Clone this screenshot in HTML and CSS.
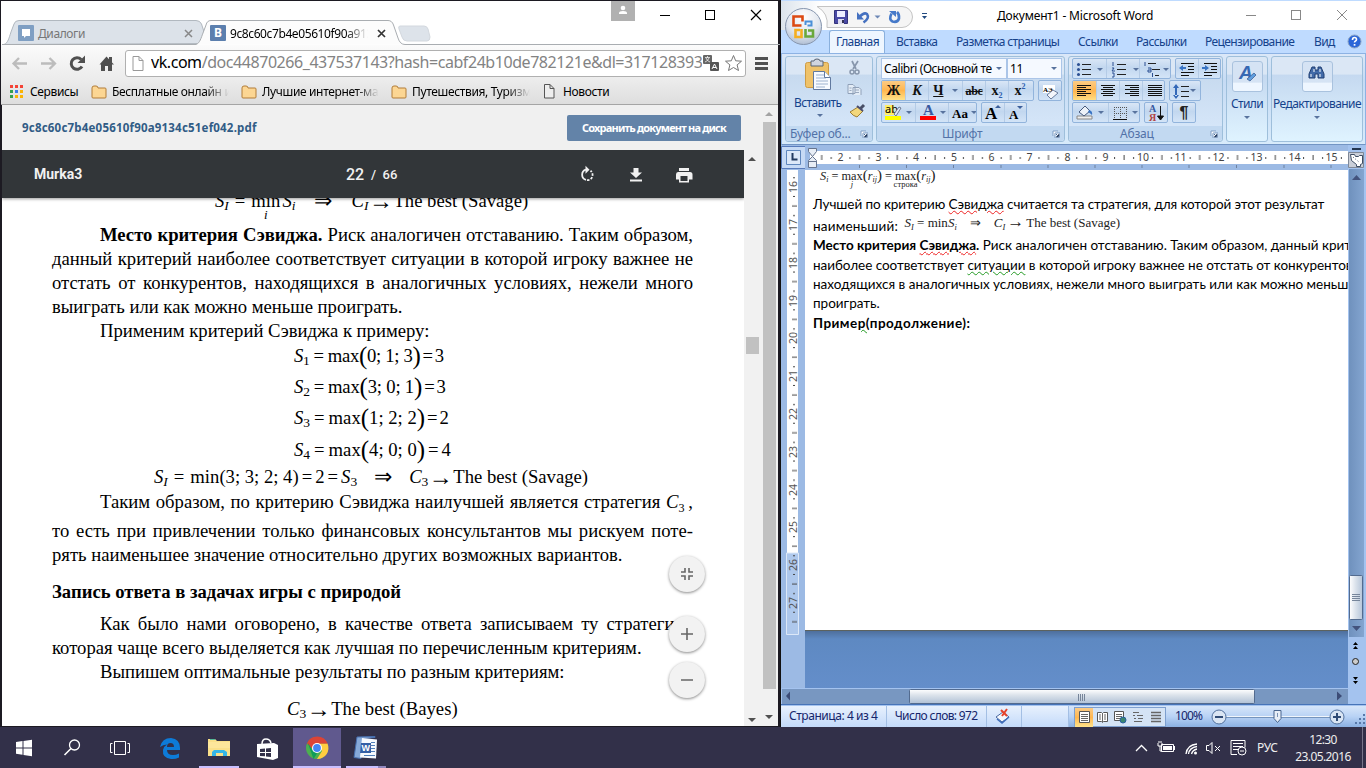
FILE: index.html
```html
<!DOCTYPE html>
<html lang="ru">
<head>
<meta charset="utf-8">
<title>Рабочий стол</title>
<link rel="stylesheet" href="styles.css">
</head>
<body>
<div class="desktop">
<main class="windows">
<section class="chrome">
  <header class="tabbar">
    <svg class="tabshapes" width="778" height="44" viewBox="2 1 778 44">
      <path d="M4 44.500C8 43 9 38 11 32L14 24Q15 20.500 19 20.500H196Q200 20.500 201.500 24L206 38Q207 43 203 43.500Z" fill="#dce2e9" stroke="#b1b8bf"/>
      <path d="M400 26H424Q427 26 428 29L430 37Q430 41 427 41H407Q403 41 402 37L399 29Q398 26 400 26Z" fill="#dde3ea" stroke="#d3d8de"/>
      <path d="M2 44.500H196C200 43 201 38 203 33L206 25Q207 20.500 211 20.500H388Q392 20.500 393.500 25L398 38Q400 44.500 405 44.500H780" fill="#fcfcfc" stroke="#a9adb1"/>
    </svg>
    <div class="tab first">
      <svg width="16" height="16"><rect width="16" height="16" rx="1" fill="#7f9fc3"/><path d="M4 4h8v7H8l-2 2v-2H4z" fill="#fff"/></svg>
      <span class="t1">Диалоги</span>
      <svg width="9" height="9"><path d="M1 1l7 7M8 1l-7 7" stroke="#888" stroke-width="1.500"/></svg>
    </div>
    <div class="tab second">
      <span class="vk">B</span><span class="t2">9c8c60c7b4e05610f90a913</span>
      <svg width="9" height="9"><path d="M1 1l7 7M8 1l-7 7" stroke="#333" stroke-width="1.700"/></svg>
    </div>
    <div class="user"><svg width="10" height="10"><circle cx="5" cy="3" r="2.300" fill="#fff"/><path d="M1 9V8q0-2 4-2t4 2v1z" fill="#fff"/></svg></div>
    <svg class="winbtns" width="104" height="14"><path d="M1 7.500h10" stroke="#000"/><rect x="46.500" y="2.500" width="9" height="9" fill="none" stroke="#000"/><path d="M92 2l10 10M102 2l-10 10" stroke="#000" stroke-width="1.200"/></svg>
  </header>
  <div class="toolbar">
    <svg class="nav" width="108" height="22" viewBox="10 51 108 22">
      <path d="M27 62.500H14M19 57l-5.500 5.500L19 68" fill="none" stroke="#bcbcbc" stroke-width="2.300"/>
      <path d="M41 62.500h13M49.500 57l5.500 5.500-5.500 5.500" fill="none" stroke="#bcbcbc" stroke-width="2.300"/>
      <path d="M82 65.500a5.800 5.800 0 1 1-.8-7" fill="none" stroke="#505050" stroke-width="3"/><path d="M85 54.500V62h-7.500z" fill="#505050"/>
      <path d="M99.500 63.500l7-8 2.500 2.800V56h3v5.500l2 2h-2V70h-4v-5h-3v5h-4v-6.500z" fill="#505050"/>
    </svg>
    <div class="omni">
      <svg width="12" height="15"><path d="M1 .5h6l4 4v10H1zM7 .5v4h4" fill="#fff" stroke="#999"/></svg>
      <span class="url"><b>vk.com</b>/doc44870266_437537143?hash=cabf24b10de782121e&amp;dl=317128393</span>
      <svg class="tr" width="16" height="16"><rect width="9" height="9" rx="1" fill="#666"/><path d="M2 2.500h5M4.500 1v2M6 3Q5 6 2 7M3 3q1 3 4 4" stroke="#eee" fill="none" stroke-width=".8"/><rect x="7" y="7" width="9" height="9" rx="1" fill="#555"/><path d="M9 14l2.500-5L14 14M10 12.500h3" stroke="#fff" fill="none"/></svg>
      <svg width="19" height="18"><path d="M9.500 1.500l2.200 5.300 5.800.4-4.400 3.700 1.400 5.600-5-3-5 3 1.400-5.600L1.500 7.200l5.800-.4z" fill="#fff" stroke="#777"/></svg>
    </div>
    <svg class="menu" width="13" height="13"><path d="M0 1.500h13M0 6.500h13M0 11.500h13" stroke="#505050" stroke-width="3"/></svg>
  </div>
  <nav class="bookmarks">
    <svg width="13" height="13"><path d="M0 0h3v3H0zM5 0h3v3H5zM10 0h3v3h-3z" fill="#f44336"/><path d="M0 5h3v3H0zM0 10h3v3H0z" fill="#34a050"/><path d="M5 5h3v3H5z" fill="#3b7de9"/><path d="M10 5h3v3h-3zM5 10h3v3H5zM10 10h3v3h-3z" fill="#fbb405"/></svg>
    <span class="b0">Сервисы</span>
    <svg width="16" height="14"><path d="M1 3Q1 1 3 1h2q2 0 2 2h7q1 0 1 1v8q0 1-1 1H2q-1 0-1-1z" fill="#fcd693" stroke="#b27d38"/></svg><span class="b1 fade">Бесплатные онлайн и</span>
    <svg width="16" height="14"><path d="M1 3Q1 1 3 1h2q2 0 2 2h7q1 0 1 1v8q0 1-1 1H2q-1 0-1-1z" fill="#fcd693" stroke="#b27d38"/></svg><span class="b2 fade">Лучшие интернет-ма</span>
    <svg width="16" height="14"><path d="M1 3Q1 1 3 1h2q2 0 2 2h7q1 0 1 1v8q0 1-1 1H2q-1 0-1-1z" fill="#fcd693" stroke="#b27d38"/></svg><span class="b3 fade">Путешествия, Туризм</span>
    <svg width="11" height="15"><path d="M.5.5H6l4 4v9.500H.5zM6 .5v4h4" fill="#eee" stroke="#555"/></svg><span class="b4">Новости</span>
  </nav>
  <div class="web">
    <div class="left">
      <div class="vkhead"><span class="fname">9c8c60c7b4e05610f90a9134c51ef042.pdf</span><span class="save">Сохранить документ на диск</span></div>
      <div class="pdfrow">
        <div class="pdf">
          <div class="pdfbar"><b>Murka3</b><span class="pg">22</span><span class="tot">/&nbsp; 66</span>
            <svg width="120" height="24" viewBox="578 161 120 24"><path d="M586 168.700a5.300 5.300 0 0 0 0 10.200" fill="none" stroke="#f1f1f1" stroke-width="1.800"/><path d="M585.500 164.800v8l4-4z" fill="#f1f1f1"/><path d="M587 179.200a5.300 5.300 0 0 0 3.500-9.500" fill="none" stroke="#f1f1f1" stroke-width="1.800" stroke-dasharray="2.500 1.300"/><path d="M633.500 167h5v4.500h3.500l-6 5.500-6-5.500h3.500zM630 178.500h12v2h-12z" fill="#f1f1f1"/><path d="M679 167h10v3h-10zM678 171h12q2.500 0 2.500 2.500v5H689v3h-10v-3h-3v-5q0-2.500 2-2.500zM680.500 175v5h7v-5z" fill="#f1f1f1" fill-rule="evenodd"/></svg>
          </div>
          <article class="page">
            <p class="m m0"><i>S</i><sub><i>I</i></sub><span class="eq">=</span><span class="mn">min<em>i</em></span><i>S</i><sub><i>i</i></sub><span class="imp">⇒</span><i>C</i><sub><i>I</i></sub><span class="ar">→</span>The best (Savage)</p>
            <p class="ind j l1"><b>Место критерия Сэвиджа.</b> Риск аналогичен отставанию. Таким образом,</p>
            <p class="j">данный критерий наиболее соответствует ситуации в которой игроку важнее не</p>
            <p class="j">отстать от конкурентов, находящихся в аналогичных условиях, нежели много</p>
            <p>выиграть или как можно меньше проиграть.</p>
            <p class="ind">Применим критерий Сэвиджа к примеру:</p>
            <p class="m f1"><i>S</i><sub>1</sub><span class="eq">=</span>max<big>(</big>0; 1; 3<big>)</big><span class="eq2">=</span>3</p>
            <p class="m f2"><i>S</i><sub>2</sub><span class="eq">=</span>max<big>(</big>3; 0; 1<big>)</big><span class="eq2">=</span>3</p>
            <p class="m f3"><i>S</i><sub>3</sub><span class="eq">=</span>max<big>(</big>1; 2; 2<big>)</big><span class="eq2">=</span>2</p>
            <p class="m f4"><i>S</i><sub>4</sub><span class="eq">=</span>max<big>(</big>4; 0; 0<big>)</big><span class="eq2">=</span>4</p>
            <p class="m f5"><i>S</i><sub><i>I</i></sub><span class="eq">=</span>min(3; 3; 2; 4)<span class="eq2">=</span>2<span class="eq2">=</span><i>S</i><sub>3</sub><span class="imp">⇒</span><i>C</i><sub>3</sub><span class="ar">→</span>The best (Savage)</p>
            <p class="ind j l6">Таким образом, по критерию Сэвиджа наилучшей является стратегия <span class="c3"><i>C</i><sub>3</sub>&thinsp;,</span></p>
            <p class="j l7">то есть при привлечении только финансовых консультантов мы рискуем поте-</p>
            <p>рять наименьшее значение относительно других возможных вариантов.</p>
            <p class="l8"><b>Запись ответа в задачах игры с природой</b></p>
            <p class="ind j l9">Как было нами оговорено, в качестве ответа записываем ту стратегию,</p>
            <p>которая чаще всего выделяется как лучшая по перечисленным критериям.</p>
            <p class="ind">Выпишем оптимальные результаты по разным критериям:</p>
            <p class="m f6"><i>C</i><sub>3</sub><span class="ar">→</span>The best (Bayes)</p>
          </article>
          <div class="fabs">
            <svg width="36" height="36"><path d="M12 16h4v-4M24 16h-4v-4M12 20h4v4M24 20h-4v4" fill="none" stroke="#666" stroke-width="1.600"/></svg>
            <svg class="plus" width="36" height="36"><path d="M12 18h12M18 12v12" stroke="#666" stroke-width="1.600"/></svg>
            <svg class="minus" width="36" height="36"><path d="M12 18h12" stroke="#666" stroke-width="1.600"/></svg>
          </div>
        </div>
        <div class="sb inner"><svg width="16" height="576" viewBox="744 150 16 576"><path d="M748 161l4-4 4 4z" fill="#505050"/><path d="M746 337h13v17h-13z" fill="#c1c1c1"/><path d="M748 718l4 4 4-4z" fill="#505050"/></svg></div>
      </div>
    </div>
    <div class="sb outer"><svg width="18" height="621" viewBox="761 105 18 621"><path d="M766 116l4-4 4 4z" fill="#a3a3a3"/><path d="M764 122h13v567h-13z" fill="#c1c1c1"/><path d="M766 715l4 4 4-4z" fill="#505050"/></svg></div>
  </div>
</section>

<section class="word">
  <header class="wtitle">
    <svg class="qat" width="170" height="52" viewBox="781 1 170 52">
      <defs><radialGradient id="orb" cx=".5" cy=".25" r=".8"><stop offset="0" stop-color="#fff"/><stop offset=".6" stop-color="#dfe5ee"/><stop offset="1" stop-color="#a8b8d0"/></radialGradient></defs>
      <path d="M817 6.500H902a10.500 10.500 0 0 1 0 21H827Q829 13 817 6.500Z" fill="#f5f5f5" stroke="#c4c4c4"/>
      <circle cx="803.500" cy="26.500" r="18" fill="url(#orb)" stroke="#8796ae"/>
      <g fill="none" stroke-width="2.600"><path d="M801.500 25.500h-8v-9h9v5" stroke="#dc4a13"/><path d="M805.500 25v-3.500h6v4h-4" stroke="#4a90d8" stroke-width="2"/><path d="M801.500 29v8h-6v-7H800" stroke="#f5ae20"/><path d="M805.500 29v7.500h7.500v-6h-5" stroke="#6aa83c"/></g>
      <path d="M834.500 10.500h13v13h-13z" fill="#4a4aa5" stroke="#33337c"/><path d="M837 11h8v6h-8z" fill="#eef"/><path d="M838 19h6v5h-6z" fill="#dde"/><path d="M842 20h2v3h-2z" fill="#335"/>
      <path d="M860 16.500q4-4.500 7-2.500 3 4-3.500 8.500" fill="none" stroke="#4571c0" stroke-width="2.600"/><path d="M857 12v7.500h7z" fill="#4571c0"/>
      <path d="M874.500 15.500h6l-3 3z" fill="#6d87b5"/>
      <path d="M891.500 13.500q-3 6 1 8 5 1.500 6.500-3 .5-4-2-6.500" fill="none" stroke="#4579c9" stroke-width="2.600"/><path d="M889 11h7v6z" fill="#4579c9"/>
      <path d="M922 13.500h5" stroke="#224a80"/><path d="M922 16h5l-2.500 3z" fill="#224a80"/>
    </svg>
    <span class="wname">Документ1 - Microsoft Word</span>
    <svg class="wbtns" width="104" height="14"><path d="M1 7.500h10" stroke="#888"/><rect x="46.500" y="2.500" width="9" height="9" fill="none" stroke="#888"/><path d="M92 2l10 10M102 2l-10 10" stroke="#888"/></svg>
  </header>
  <nav class="wtabs">
    <span class="act a0">Главная</span><span class="a1">Вставка</span><span class="a2">Разметка страницы</span><span class="a3">Ссылки</span><span class="a4">Рассылки</span><span class="a5">Рецензирование</span><span class="a6">Вид</span>
    <svg width="15" height="15"><circle cx="7.500" cy="7.500" r="6.500" fill="#2b66d8" stroke="#8ba4c6"/><path d="M5.500 6q0-2.500 2-2.500t2 2q0 1-1 1.500t-1 1.500" stroke="#fff" fill="none" stroke-width="1.600"/><path d="M6.700 10h1.700v1.700H6.700z" fill="#fff"/></svg>
  </nav>
  <div class="ribbon">
    <div class="group clip">
      <svg width="86" height="38" viewBox="786 58 86 38">
        <rect x="805.500" y="63.500" width="23" height="25" rx="2" fill="#efc269" stroke="#ce9c44"/><path d="M811 62h3q0-2 3-2t3 2h3v5h-12z" fill="#d0d5df" stroke="#5b6575"/>
        <path d="M813.500 72.500h11l6 6v12h-17z" fill="#f7faff" stroke="#61799f"/><path d="M816 76h8M816 79h10M816 82h12M816 85h12M816 88h9" stroke="#9db2cf"/><path d="M824.500 72.500v6h6" fill="#fff" stroke="#61799f"/>
        <path d="M852 62l4 8M858 62l-5 8" stroke="#8796ac" stroke-width="1.700"/><circle cx="852" cy="73" r="2" fill="none" stroke="#8796ac" stroke-width="1.500"/><circle cx="857" cy="73" r="2" fill="none" stroke="#8796ac" stroke-width="1.500"/>
        <path d="M848 85.500h5l2 2v7h-7zM853 88.500h6l2 2v6h-8z" fill="#e4edf7" stroke="#8fa0b8"/><path d="M855 91h4M855 93.500h4M849.500 89h2M849.500 91.500h2" stroke="#9aa9bf"/>
      </svg>
      <div class="cliprow"><span>Вставить</span><svg width="24" height="20" viewBox="844 101 24 20"><path d="M858 111l4-4" stroke="#484f66" stroke-width="3"/><path d="M848 114l8-5 5 4-6 6q-4-1-7-5z" fill="#f3d77b" stroke="#9d7d33"/><path d="M855 108l6 5" stroke="#4c4f70" stroke-width="2"/></svg></div>
      <svg class="dd" width="6" height="4"><path d="M0 0h6L3 3z" fill="#58739e"/></svg>
      <div class="gl"><span>Буфер об...</span><svg width="8" height="8"><path d="M1 6V1h5M3 3h5v5H3z" fill="#fff" stroke="#7f9dc4"/><path d="M4 4l3 3M7 4v3H4" stroke="#4a6a98"/></svg></div>
    </div>
    <div class="group font">
      <div class="r r1"><span class="combo c1">Calibri (Основной те<svg width="6" height="4"><path d="M0 0h6L3 3z" fill="#58739e"/></svg></span><span class="combo c2">11<svg width="6" height="4"><path d="M0 0h6L3 3z" fill="#58739e"/></svg></span></div>
      <div class="r"><div class="bg w153"><b class="on">Ж</b><b><i>К</i></b><b class="wide"><u>Ч</u><svg width="6" height="4"><path d="M0 0h6L3 3z" fill="#58739e"/></svg></b><b><s>abc</s></b><b>x<small class="lo">2</small></b><b>x<small class="hi">2</small></b></div>
        <div class="bg"><svg width="22" height="20"><rect x="4" y="4" width="12" height="8" fill="#fff"/><text x="4" y="10.500" class="tiny">АЭ</text><path d="M8 14l6-5 5 3-7 6z" fill="#f4f6fb" stroke="#687b9c"/></svg></div></div>
      <div class="r"><div class="bg w96">
        <svg width="33" height="20"><path d="M3 2h9v10H3z" fill="#ffef65"/><text x="3" y="10" class="ab">ab</text><path d="M12 11l5-7 2 1-5 8z" fill="#dfe8f5" stroke="#6d7c95"/><path d="M3 13h16v4H3z" fill="#ff0"/><path d="M24 8h6l-3 3z" fill="#58739e"/></svg>
        <svg width="33" height="20"><text x="7" y="12" class="bigA">A</text><path d="M4 13h16v4H4z" fill="#f00"/><path d="M24 8h6l-3 3z" fill="#58739e"/></svg>
        <svg width="30" height="20"><text x="3" y="15" class="aa">Aa</text><path d="M22 8h6l-3 3z" fill="#58739e"/></svg></div>
        <div class="bg"><svg width="22" height="20"><text x="3" y="16" class="aa lg">A</text><path d="M13 5h6l-3-3z" fill="#3b5f9c"/></svg><svg width="22" height="20"><text x="4" y="16" class="aa">A</text><path d="M12 3h6l-3 3z" fill="#3b5f9c"/></svg></div></div>
      <div class="gl"><span>Шрифт</span><svg width="8" height="8"><path d="M1 6V1h5M3 3h5v5H3z" fill="#fff" stroke="#7f9dc4"/><path d="M4 4l3 3M7 4v3H4" stroke="#4a6a98"/></svg></div>
    </div>
    <div class="group para">
      <div class="r"><div class="bg">
        <svg width="33" height="20"><path d="M9 5.500h9M9 10.500h9M9 15.500h9" stroke="#222"/><g fill="#2b4f92"><circle cx="5.500" cy="5.500" r="1.500"/><circle cx="5.500" cy="10.500" r="1.500"/><circle cx="5.500" cy="15.500" r="1.500"/></g><path d="M24 9h6l-3 3z" fill="#58739e"/></svg>
        <svg width="33" height="20"><path d="M10 5.500h9M10 10.500h9M10 15.500h9" stroke="#222"/><path d="M6 3v4M5 9h2l-2 3h3M5 14h2v4H5" stroke="#2b4f92" fill="none"/><path d="M26 9h6l-3 3z" fill="#58739e"/></svg>
        <svg width="31" height="20"><path d="M8 4.500h8M12 10.500h8M15 16.500h4" stroke="#222"/><path d="M5 3v4M8 9h3v4H8v-2h3M12.500 14v4" stroke="#2b4f92" fill="none"/><path d="M23 9h6l-3 3z" fill="#58739e"/></svg></div>
        <div class="bg"><svg width="22" height="20"><path d="M5 4.500h13M12 7.500h6M12 10.500h6M5 13.500h13M5 16.500h8" stroke="#111" stroke-width="1.200"/><path d="M3 9l4-3v6zM7 8h3v2H7z" fill="#3974c4"/></svg><svg width="22" height="20"><path d="M5 4.500h13M12 7.500h6M12 10.500h6M5 13.500h13M5 16.500h8" stroke="#111" stroke-width="1.200"/><path d="M10 9L6 6v6zM3 8h3v2H3z" fill="#3974c4"/></svg></div></div>
      <div class="r"><div class="bg">
        <svg class="on" width="23" height="20"><path d="M4 4.500h14M4 6.500h9M4 8.500h14M4 10.500h9M4 12.500h14M4 14.500h9" stroke="#111"/></svg><svg width="23" height="20"><path d="M4 4.500h14M6 6.500h10M4 8.500h14M6 10.500h10M4 12.500h14M6 14.500h10" stroke="#111"/></svg><svg width="23" height="20"><path d="M5 4.500h14M10 6.500h9M5 8.500h14M10 10.500h9M5 12.500h14M10 14.500h9" stroke="#111"/></svg><svg width="22" height="20"><path d="M5 4.500h14M5 6.500h14M5 8.500h14M5 10.500h14M5 12.500h14M5 14.500h14" stroke="#111"/></svg></div>
        <div class="bg"><svg width="30" height="20"><path d="M11 5.500h8M11 10.500h8M11 15.500h8" stroke="#222"/><path d="M6 3l3 4H3zM6 18l3-4H3zM5 6h2v9H5z" fill="#3368b8"/><path d="M20 8h6l-3 3z" fill="#58739e"/></svg></div></div>
      <div class="r"><div class="bg">
        <svg width="35" height="20"><path d="M4 13h15v3H4z" fill="#eee" stroke="#888"/><path d="M6 9l6-6 5 5-6 5z" fill="#edf2f9" stroke="#47597b"/><path d="M16 7q4 1 3 5-2-2-4-3z" fill="#3974c4"/><path d="M25 8h6l-3 3z" fill="#58739e"/></svg>
        <svg width="31" height="20"><path d="M5 4.500h12M5 10.500h12M5.500 4v12M11.500 4v12M17.500 4v12" stroke="#555" stroke-dasharray="1 1"/><path d="M4 16.500h14" stroke="#111"/><path d="M23 8h6l-3 3z" fill="#58739e"/></svg></div>
        <div class="bg g3"><svg width="22" height="20"><text x="4" y="9" class="ay blue">А</text><text x="4" y="18" class="ay red">Я</text><path d="M15.500 3v12M12.500 13l3 4 3-4z" stroke="#111" fill="#111"/></svg></div><div class="bg g3"><span class="pil">¶</span></div></div>
      <div class="gl"><span>Абзац</span><svg width="8" height="8"><path d="M1 6V1h5M3 3h5v5H3z" fill="#fff" stroke="#7f9dc4"/><path d="M4 4l3 3M7 4v3H4" stroke="#4a6a98"/></svg></div>
    </div>
    <div class="group col styles"><div class="ib"><svg width="24" height="26"><text x="4" y="17" class="stA">A</text><path d="M12 17l7-6 2 2-6 6z" fill="#5f9ede" stroke="#33558d" stroke-width=".7"/></svg></div><span>Стили</span><svg class="dd" width="6" height="4"><path d="M0 0h6L3 3z" fill="#58739e"/></svg></div>
    <div class="group col edit"><div class="ib"><svg width="20" height="26"><path d="M5 5h3v3h3V5h3l3 7v4h-6v-4H8v4H2v-4z" fill="#416aa8" stroke="#203e72"/><path d="M4 12v3M13 12v3M7 7v3M13 7v3" stroke="#fff"/></svg></div><span>Редактирование</span><svg class="dd" width="6" height="4"><path d="M0 0h6L3 3z" fill="#58739e"/></svg></div>
  </div>
  <div class="work">
    <svg class="vr" width="24" height="543" viewBox="781 145 24 543">
      <defs><pattern id="vt" x="787" y="187" width="12" height="37.800" patternUnits="userSpaceOnUse"><path d="M6 9.500h2M6 28.500h2" stroke="#444"/><path d="M5 19h5" stroke="#444"/></pattern></defs>
      <path d="M781 145h24v543h-24z" fill="#9cbae4"/><path d="M781.500 146.500h24v22h-24z" fill="#c6daf5" stroke="#597cbc"/><path d="M786.500 150.500h14v14h-14z" fill="#dce8f8" stroke="#5f87bd"/><path d="M792.500 153v6.500h5" fill="none" stroke="#223a60" stroke-width="2"/>
      <path d="M787 170h11v383h-11z" fill="#fff"/><path d="M786.500 553h12v81.500h-12z" fill="#aec8ec" stroke="#dce8f8"/><path d="M787 176h12v448h-12z" fill="url(#vt)"/>
      <g class="vn"><text transform="translate(797 187) rotate(-90)">16</text><text transform="translate(797 225) rotate(-90)">17</text><text transform="translate(797 263) rotate(-90)">18</text><text transform="translate(797 301) rotate(-90)">19</text><text transform="translate(797 338) rotate(-90)">20</text><text transform="translate(797 376) rotate(-90)">21</text><text transform="translate(797 414) rotate(-90)">22</text><text transform="translate(797 452) rotate(-90)">23</text><text transform="translate(797 490) rotate(-90)">24</text><text transform="translate(797 527) rotate(-90)">25</text><text transform="translate(797 565) rotate(-90)">26</text><text transform="translate(797 603) rotate(-90)">27</text></g>
    </svg>
    <div class="doccol">
      <svg class="hr" width="543" height="25" viewBox="805 145 543 25">
        <defs><pattern id="ht" x="840.500" y="151" width="37.800" height="13" patternUnits="userSpaceOnUse"><path d="M9.500 6v2M28.500 6v2" stroke="#444"/><path d="M19 4v5" stroke="#444"/></pattern></defs>
        <path d="M805 145h543v25h-543z" fill="#9cbae4"/><path d="M810 151h538v13h-538z" fill="#fff"/><path d="M820 151h522v13h-522z" fill="url(#ht)"/>
        <path d="M859.500 165v3M906.500 165v3M953.500 165v3M1001 165v3M1048 165v3M1095 165v3M1142 165v3M1189 165v3M1236.500 165v3M1284 165v3M1331 165v3" stroke="#6d819f"/>
        <path d="M808.500 148.500h8v3l-4 5 4 4v7h-8v-7l4-4-4-5z" fill="#e8eef6" stroke="#66758f"/><path d="M808 161.500h9" stroke="#66758f"/>
        <g class="hn"><text x="840.500" y="161">2</text><text x="878.500" y="161">3</text><text x="916" y="161">4</text><text x="954" y="161">5</text><text x="991.500" y="161">6</text><text x="1029.500" y="161">7</text><text x="1067.500" y="161">8</text><text x="1105.500" y="161">9</text><text x="1143" y="161">10</text><text x="1180.500" y="161">11</text><text x="1218.500" y="161">12</text><text x="1256.500" y="161">13</text><text x="1294.500" y="161">14</text><text x="1331.500" y="161">15</text></g>
      </svg>
      <div class="wpage">
        <p class="wf wf1"><i>S<sub>i</sub></i> = <span class="mn">max<em><i>j</i></em></span><big>(</big><i>r<sub>ij</sub></i><big>)</big> = <span class="mn">max<em>строка</em></span><big>(</big><i>r<sub>ij</sub></i><big>)</big></p>
        <p class="k1">Лучшей по критерию <u class="sp">Сэвиджа</u> считается та стратегия, для которой этот результат</p>
        <p class="k2"><span class="naim">наименьший:</span> <span class="wf wf2"><i>S<sub>I</sub></i> = min<i>S<sub>i</sub></i><span class="imp">⇒</span><i>C<sub>I</sub></i><span class="war">→</span>The best (Savage)</span></p>
        <p class="k3"><b>Место критерия <u class="sp">Сэвиджа</u>.</b> Риск аналогичен отставанию. Таким образом, данный критерий</p>
        <p class="k4">наиболее соответствует <u class="gr">ситуации</u> в которой игроку важнее не отстать от конкурентов,</p>
        <p class="k5">находящихся в аналогичных условиях, нежели много выиграть или как можно меньше</p>
        <p class="k6">проиграть.</p>
        <p class="k7"><b>Приме<u class="gr">р(</u>продолжение):</b></p>
      </div>
      <div class="under"></div>
    </div>
    <svg class="vs" width="18" height="543" viewBox="1348 145 18 543">
      <defs><linearGradient id="vg"><stop offset="0" stop-color="#6f91bd"/><stop offset="1" stop-color="#84a5d0"/></linearGradient><linearGradient id="th"><stop offset="0" stop-color="#fff"/><stop offset=".5" stop-color="#d8e0ea"/><stop offset="1" stop-color="#b5c5d9"/></linearGradient></defs>
      <path d="M1348 145h18v543h-18z" fill="#a4c3ef"/><path d="M1352 149h9" stroke="#24364f" stroke-width="2"/><path d="M1348.500 152.500h15v15h-15z" fill="#c9ced8" stroke="#7f8897"/><path d="M1350.500 154.500h4l1 2h3l1-1h3v8l-2 1v2h-4v-2l-5-4z" fill="#fff" stroke="#3d4d64"/><path d="M1353 157l6 5" stroke="#3d4d64" stroke-dasharray="1 2"/>
      <path d="M1349 169h15v468h-15z" fill="url(#vg)"/><path d="M1352 180l4.500-5 4.500 5z" fill="#43537d"/>
      <rect x="1349.500" y="575.500" width="13" height="44" rx="1" fill="url(#th)" stroke="#536b8f"/><path d="M1352 594.500h8M1352 596.500h8M1352 598.500h8M1352 600.500h8" stroke="#76859a"/><path d="M1352 626l4.500 5 4.500-5z" fill="#43537d"/>
      <path d="M1353 645l2.500-3 2.500 3zM1353 649l2.500-3 2.500 3zM1353 677l2.500 3 2.500-3zM1353 681l2.500 3 2.500-3z"/><circle cx="1355.500" cy="661.500" r="3" fill="#ccc" stroke="#222"/>
    </svg>
  </div>
  <svg class="hs" width="585" height="18" viewBox="781 688 585 18"><defs><linearGradient id="hg" x2="0" y2="1"><stop offset="0" stop-color="#fff"/><stop offset=".4" stop-color="#dce3eb"/><stop offset="1" stop-color="#b0c1d6"/></linearGradient></defs><path d="M781 688h585v18h-585z" fill="#a4c3ef"/><path d="M782 689h566v15h-566z" fill="#7897c1"/><path d="M790 691.500v9l-4-4.500z" fill="#3c4c76"/><rect x="909.500" y="689.500" width="345" height="14" rx="1" fill="url(#hg)" stroke="#536b8f"/><path d="M1078.500 694v7M1080.500 694v7M1082.500 694v7M1084.500 694v7" stroke="#76859a"/><path d="M1337 691.500v9l5-4.500z" fill="#3c4c76"/><path d="M781 704.500h585" stroke="#4774b8"/></svg>
  <footer class="status"><span class="s1">Страница: 4 из 4</span><span class="s2">Число слов: 972</span><span class="s3"><svg width="18" height="16"><path d="M2 9l7-5 6 5-7 5z" fill="#f5f8fd" stroke="#4a69a1"/><path d="M3 11l5 4 7-6" fill="none" stroke="#3e6dbb" stroke-width="1.500"/><path d="M7 2l6 6M13 1L8 8" stroke="#e6432c" stroke-width="2"/></svg></span><span class="s4"></span>
    <div class="views"><svg class="on" width="18" height="19"><path d="M4.500 3.500h10v11h-10z" fill="#fff" stroke="#555"/><path d="M6 6.500h7M6 8.500h7M6 10.500h7M6 12.500h7" stroke="#666"/></svg><svg width="18" height="19"><path d="M4.500 4.500h4l1 1 1-1h4v9h-4l-1 1-1-1h-4z" fill="#fff" stroke="#555"/><path d="M6 7h2M6 9h2M6 11h2M11 7h2M11 9h2M11 11h2M9.500 5v9" stroke="#666"/></svg><svg width="18" height="19"><path d="M3.500 3.500h9v9h-9z" fill="#fff" stroke="#555"/><path d="M5 6.500h6M5 8.500h6M5 10.500h4" stroke="#666"/><circle cx="12" cy="12" r="3" fill="#3a8470" stroke="#2860a0"/></svg><svg width="18" height="19"><path d="M4 4.500h6M8 7.500h6M9 10.500h5M5 13.500h8M4 7.500h2M5 10.500h2" stroke="#666"/></svg><svg width="18" height="19"><path d="M4 4.500h10M4 7.500h10M4 10.500h10M4 13.500h10" stroke="#666" stroke-width="1.500"/></svg></div>
    <span class="pc">100%</span>
    <svg class="zoom" width="156" height="20" viewBox="1210 706 156 20"><path d="M1226 715.500h104" stroke="#f0f5fb"/><path d="M1226 716.500h104" stroke="#7594bd"/><circle cx="1219" cy="716" r="7" fill="#dae5f3" stroke="#52719d"/><circle cx="1337" cy="716" r="7" fill="#dae5f3" stroke="#52719d"/><path d="M1215 716h8M1333 716h8M1337 712v8" stroke="#304b75" stroke-width="2"/><path d="M1274 709.500h7v8l-3.500 4-3.500-4z" fill="#e7eef7" stroke="#48658f"/><path d="M1277.500 712v4" stroke="#7b93b5"/><path d="M1363 713h2v2h-2zM1359 717h2v2h-2zM1363 717h2v2h-2zM1355 721h2v2h-2zM1359 721h2v2h-2zM1363 721h2v2h-2z" fill="#5879aa"/></svg>
  </footer>
</section>
</main>
<footer class="taskbar">
  <svg width="400" height="41" viewBox="0 727 400 41">
    <path d="M293 728h48v40h-48z" fill="#60598e"/>
    <path d="M16 742l6.500-1v6.500H16zM23.500 741l8.500-1.200v7.700h-8.500zM16 748.500h6.500v6.300l-6.500-1zM23.500 748.500H32v7.700l-8.500-1.200z" fill="#fff"/>
    <circle cx="74.500" cy="745" r="5" fill="none" stroke="#fff" stroke-width="1.300"/><path d="M71 748.500l-6.500 6.500" stroke="#fff" stroke-width="1.600"/>
    <path d="M114.500 741.500h11v13h-11zM112.500 743.500h-2v9h2M127.500 743.500h2v9h-2" fill="none" stroke="#fff"/>
    <path d="M160 747q2-9 11-9 9 1 9 10v2h-13q0 5 6 5 3 0 6-1.500v4q-4 2-8 1.500-9-1-8-9 1-4 4-5.500-4 0-7 2.500zM167 747h7q0-4-3.500-4t-3.500 4z" fill="#0d7bd8"/>
    <path d="M208 739h7l2 2h13v15h-22z" fill="#fae08a"/><path d="M210 739.500h5" stroke="#5b9" /><path d="M208 742h22v6h-22z" fill="#fde69b"/><path d="M212 756v-4l2-2h10l3 2v4h-4v-3h-7v3z" fill="#35b6e8"/>
    <path d="M257 744l17-1 4 2v13l-5 2-16-3z" fill="#fff"/><path d="M262 744q0-5 4-5t5 4" fill="none" stroke="#fff" stroke-width="1.500"/><path d="M260 749l5-.4v3.400h-5zM266 748.500l5-.4v4h-5zM260 753h5v3.300l-5-.4zM266 753h5v4l-5-.5z" fill="#323049"/>
    <circle cx="317" cy="748" r="11" fill="#4caf50"/><path d="M307 743.500a11 11 0 0 1 20.500 0H317l-5 5z" fill="#db4437"/><path d="M307.500 742l5 8.500 4.500 3-3.500 5.500" fill="#0f9d58"/><path d="M317 743.500h10.500A11 11 0 0 1 317 759l5-8z" fill="#ffcd40"/><path d="M307.500 742.500q3-5.500 9.500-5.500 7 0 10.500 6.500H317l-5 4z" fill="#db4437"/><circle cx="317" cy="748" r="5" fill="#fff"/><circle cx="317" cy="748" r="3.900" fill="#4285f4"/>
    <path d="M357 737l18-.5v1l-11 1-3 20-7-1z" fill="#86a9d8" stroke="#476faf"/><path d="M362 738l15 1.500-1 19-16-1z" fill="#f6f9fe"/><path d="M361 743h10v10h-11z" fill="#345fa6"/><text x="361.500" y="751" class="ww">W</text><path d="M371 742.500h4M371 745.500h4M371 748.500h4M371 751.500h4M364 755.500h11" stroke="#507fba"/>
    <path d="M199 766h40v2h-40zM293 766h48v2h-48zM346 766h32v2h-32z" fill="#c9bfff"/><path d="M378 766h8v2h-8z" fill="#9187bd"/>
  </svg>
  <div class="tray">
    <svg width="120" height="24" viewBox="1132 736 120 24" fill="none" stroke="#fff"><path d="M1136 751l5.500-5.500 5.500 5.500" stroke-width="1.300"/><path d="M1161.500 744.500h12v7h-12z"/><path d="M1163 746h9v4h-9z" fill="#fff" stroke="none"/><path d="M1174.500 746v4M1158 743v3h4v-3M1159 741v2M1161 741v2M1160 746v5h2"/><path d="M1186 754q1-9 11-10M1188.500 754q1-6.500 8.500-7.500M1191.500 754q1-4 5.500-5" stroke-width="1.300"/><circle cx="1195.500" cy="753" r="1.500" fill="#fff" stroke="none"/><path d="M1206.500 745.500h2.500l3-3v11l-3-3h-2.500zM1215 746l5 5M1220 746l-5 5"/><path d="M1237 754.500h-3l-3 0v-14h14v7M1233 743.500h10M1233 746.500h10M1233 749.500h5"/><circle cx="1242" cy="751" r="4"/><path d="M1240 751h4"/></svg>
    <span class="lang">РУС</span><div class="clock"><span>12:30</span><span>23.05.2016</span></div><span class="peek"></span>
  </div>
</footer>
</div>
</body>
</html>
```
FILE: styles.css
```css
*{box-sizing:border-box}
body{margin:0;width:1366px;height:768px;overflow:hidden;font-family:"Noto Sans","Open Sans",sans-serif;font-size:12px;color:#000;background:#17151f}
p{margin:0}
svg{display:block;flex:none}
span{white-space:nowrap}
.desktop{display:flex;flex-direction:column;height:768px}
.windows{display:flex;height:727px}
.chrome{width:781px;padding:1px 2px 1px 1px;border-right:1px solid #111;background:#1c1a22;display:flex;flex-direction:column}
.tabbar{height:44px;background:#fff;display:flex;position:relative}
.tabshapes{position:absolute;left:1px;top:0}
.tab{position:relative;display:flex;align-items:center;height:16px;margin-top:24px}
.first{margin-left:17px;width:177px}
.t1{width:150px;padding-left:4px;color:#777;letter-spacing:-.4px}
.second{margin-left:15px;width:176px}
.vk{width:16px;height:16px;background:#5b7fae;color:#fff;font-weight:700;text-align:center;line-height:16px;border-radius:1px}
.t2{width:138px;margin:0 9px 0 4px;overflow:hidden;letter-spacing:-.4px;-webkit-mask-image:linear-gradient(90deg,#000 115px,transparent 138px)}
.user{position:relative;width:24px;height:20px;margin-left:225px;background:#b1b1b1;display:flex;justify-content:center;padding-top:4px}
.winbtns{position:relative;margin:7px 0 0 24px}
.toolbar{height:36px;display:flex;align-items:center;background:linear-gradient(#fbfbfb,#ebebeb);padding-left:9px}
.omni{margin-left:7px;width:621px;height:27px;border:1px solid #b0b0b0;border-radius:3px;background:#fff;display:flex;align-items:center;padding-left:6px}
.url{font-size:16px;width:551px;margin-left:7px;overflow:hidden;color:#838383;height:24px;line-height:23px;flex:none;letter-spacing:-.44px}
.url b{font-weight:400;color:#000}
.tr{margin-right:5px;margin-left:1px}
.menu{margin-left:9px}
.bookmarks{height:24px;background:linear-gradient(#ebebeb,#dedede);border-bottom:1px solid #a5a5a5;display:flex;align-items:center;padding:0 0 2px 9px}
.bookmarks span{letter-spacing:-.35px}
.b0{width:54px;margin-left:7px;margin-right:7px}
.fade{overflow:hidden;margin-left:5px;-webkit-mask-image:linear-gradient(90deg,#000 80%,transparent)}
.b1{width:117px;margin-right:12px}.b2{width:117px;margin-right:12px}.b3{width:118px;margin-right:14px}.b4{margin-left:8px}
.web{flex:1;display:flex;background:#f1f1f1;margin-left:1px;min-height:0}
.left{width:758px;display:flex;flex-direction:column}
.vkhead{height:45px;background:#f0f0f0;display:flex;align-items:center;justify-content:space-between;padding:0 19px 0 20px;font-weight:700}
.fname{color:#315c86;font-size:11.500px;letter-spacing:.2px}
.save{background:#6383a8;color:#fff;width:174px;height:26px;border-radius:2px;text-align:center;line-height:26px;font-size:11px;letter-spacing:-.8px}
.pdfrow{display:flex;height:576px}
.pdf{width:742px;background:#fff;position:relative;overflow:hidden;display:flex;flex-direction:column}
.pdfbar{height:48px;background:#323639;color:#f1f1f1;display:flex;align-items:center;padding-left:32px;flex:none;font:500 14px Roboto,sans-serif;position:relative;z-index:1;box-shadow:0 1px 3px #0006}
.pdfbar b{width:312px}
.pg{font-size:16px;width:25px}.tot{width:207px;font-size:13px}
.page{font-family:"Liberation Serif",serif;font-size:18.670px;margin:-9px 0 0 50px;width:641px}
.page p{height:24px;line-height:24px;white-space:nowrap}
.page .ind{padding-left:48px}
.page .j{white-space:normal;text-align-last:justify}
.page .m{display:flex}
sub{font-size:65%;line-height:0;vertical-align:-.3em}
.m sub{line-height:24px;position:relative;top:5px;font-size:13.500px}
.page .m0{margin-left:163px}
.page .l1{margin-top:10px}
.eq{padding:0 4px}.eq2{padding:0 2px}
.m0 .eq,.f5 .eq{padding:0 6px}.f5 .eq2{padding:0 3px}
.mn{display:inline-flex;flex-direction:column;align-items:center;position:relative}
.m0 .mn{margin-right:2px}
.mn em{position:absolute;top:14px;font-size:13px}
.page .imp{width:52px;text-align:center;font-size:22px}
.page .m0 .imp{width:56px}
.page .ar{width:25px;text-align:center;font-size:24px}
.page big{font-size:25px}
.page .f1{margin:1px 0 0 242px;letter-spacing:-.3px}.page .f2,.page .f3{margin:7px 0 0 242px}.page .f4{margin:8px 0 0 242px}
.page .f2{letter-spacing:-.2px}
.page .f4 .eq2{padding:0 3px}
.page .f5{margin:3px 0 0 102px}
.page .l6{margin-top:1px}.page .l7{margin-top:5px}.page .l8{margin-top:13px}.page .l9{margin-top:8px}
.page .f6{margin:13px 0 0 235px}
.fabs{position:absolute;left:667px;top:406px}
.fabs svg{border-radius:50%;background:#f2f2f2;box-shadow:0 1px 3px #0007}
.plus{margin-top:24px}.minus{margin-top:10px}
.sb{background:#f1f1f1}
.inner{width:16px}.outer{width:18px}
.word{width:585px;display:flex;flex-direction:column;padding-top:1px;background:#bfdbff;color:#15428b}
.wtitle{height:29px;background:linear-gradient(90deg,#dce4ec,#fff 40px);display:flex}
.qat{margin-bottom:-23px;position:relative;z-index:2}
.wname{margin-left:46px;width:157px;color:#000;line-height:29px;margin-right:91px;letter-spacing:-.17px}
.wbtns{margin-top:7px}
.wtabs{height:23px;display:flex;align-items:center;padding-left:48px;background:#bfdbff}
.wtabs span{flex:none;line-height:22px;letter-spacing:-.6px}
.act{border:1px solid #8ab0dd;border-bottom:0;border-radius:3px 3px 0 0;background:#eef6ff;height:23px;padding-left:6px}
.a0{width:56px;margin-right:11px}.a1{width:60px}.a2{width:122px}.a3{width:58px}.a4{width:69px}.a5{width:109px}.a6{width:33px}
.ribbon{height:92px;flex:none;display:flex;gap:3px;padding:2px 2px 3px 3px;background:linear-gradient(#dbe8f8,#c6dbf4 30%,#d8ebfb);border:1px solid #8db2e3;border-bottom-color:#7395c4}
.group{border:1px solid #9ebfdb;border-radius:3px;background:linear-gradient(#dbe7f5 20%,#c7daef 22%,#d9e9fb);display:flex;flex-direction:column;height:86px;flex:none}
.clip{width:88px}.font{width:189px;padding:1px 0 0 4px}.para{width:155px;padding:1px 0 0 3px}
.cliprow{display:flex;height:17px;align-items:flex-start;padding-left:8px}
.cliprow span{width:52px;line-height:15px;letter-spacing:-.6px}
.cliprow svg{margin:4px 0 0 0}
.clip .dd{margin:2px 0 0 31px}
.gl{margin-top:auto;height:15px;background:#c2d9f1;color:#5272a8;display:flex;align-items:center;justify-content:space-between;padding:0 4px;border-radius:0 0 3px 3px;flex:none}
.gl span{letter-spacing:-.2px;line-height:15px}
.font .gl{margin-left:-4px}.para .gl{margin-left:-3px}
.font .gl span{margin-left:61px}.para .gl span{margin-left:47px}
.r{display:flex;gap:4px;height:22px}
.combo{height:21px;border:1px solid #abc5e8;background:#f5f9ff;color:#000;display:flex;align-items:center;justify-content:space-between;padding:0 4px 0 2px;letter-spacing:-.42px}
.c1{width:126px}.c2{width:55px}
.r1{gap:0}
.bg{display:flex;height:21px;border:1px solid #92b4dc;border-radius:2px;background:linear-gradient(#d9e6f6,#c2d7ef 45%,#d3e4f7);align-items:stretch;overflow:hidden}
.bg>*+*{border-left:1px solid #b4cbe6}
.bg b{font:700 14px/19px "Liberation Serif",serif;color:#111;width:23px;text-align:center;white-space:nowrap}
.bg b.wide{width:34px;display:flex;align-items:center;justify-content:space-around}
.bg b s{font-size:12px;letter-spacing:-.3px}
.bg small{font-size:8px;line-height:0;color:#2c5faf}.hi{vertical-align:6px}.lo{vertical-align:-3px}
.on{background:linear-gradient(#fbcb85,#ffb64f 50%,#ffe38b)}
.w153{width:153px}.w96{width:96px}
.tiny{font:700 7px "Liberation Serif"}.ab{font:11px "Noto Sans"}.bigA{font:700 15px "Liberation Serif";fill:#3758a0}.aa{font:700 13px "Liberation Serif"}.lg{font-size:17px}
.ay{font:700 10px "Liberation Serif"}.blue{fill:#3758a0}.red{fill:#b14343}
.g3{width:24px}.pil{font:700 16px/19px "Liberation Sans";color:#222;width:22px;text-align:center}
.col{align-items:center;padding-top:4px;background:linear-gradient(#dbe7f5 20%,#c5d9f0 22%,#dff3ff)}
.styles{width:42px}.edit{width:92px}
.ib{width:31px;height:31px;border:1px solid #a9c2de;border-radius:3px;background:linear-gradient(#d5e3f4 70%,#eef6ff 72%);display:flex;justify-content:center}
.col span{margin-top:3px;line-height:17px;letter-spacing:-.6px}
.col .dd{margin-top:4px}
.stA{font:italic 700 19px "Liberation Sans";fill:#3568b3}
.work{display:flex;height:543px;flex:none}
.doccol{width:543px;display:flex;flex-direction:column;overflow:hidden}
.vn text{font:10.500px "Noto Sans";fill:#555;text-anchor:middle}.hn text{font:10.500px "Noto Sans";fill:#444;text-anchor:middle}
.wpage{height:460px;background:#fff;padding-left:8px;color:#000;font:13.500px/20px Lato,sans-serif;overflow:hidden}
.wpage p{white-space:nowrap;height:20px}
.wpage .wf,.wf{font-family:"Liberation Serif",serif;font-size:12px;color:#222}
.wpage .wf1{margin-left:7px;height:24px;line-height:11px;font-size:12.300px}
.wf1 .mn em{font-size:8.500px;top:8px;font-style:normal}
.wf1 big{font-size:15px}
.naim{letter-spacing:.2px}
.k1{letter-spacing:-.08px}.k4{letter-spacing:-.04px}
.k2 .wf2{font-size:13px;position:relative;top:-4px;margin-left:3px}
.wf2 .imp{padding:0 13px}
.war{font-size:17px;line-height:0;padding:0 2px}
.wpage .k2{height:21px;line-height:24px}
.wpage .k4,.wpage .k5{height:19px}
.wpage .k6{height:20px}
.k7{letter-spacing:.45px}
.sp{text-decoration:underline wavy #e22 1px;text-underline-offset:1px}.gr{text-decoration:underline wavy #292 1px;text-underline-offset:1px}
.under{flex:1;border-top:1px solid #5c625e;background:linear-gradient(#4e6f9c,#5e89c2 8px,#648eca)}
.status{height:21px;display:flex;align-items:center;background:linear-gradient(#d7e6f9,#b8d2f5 50%,#8bb0e1);color:#15256b;flex:none}
.status span{height:21px;line-height:20px;border-right:1px solid #a3bfe4;background:linear-gradient(#e8f1fd,#c3dafa)}
.s1{width:106px;padding-left:8px;letter-spacing:-.45px}.s2{width:101px;padding-left:8px;letter-spacing:-.65px}.s3{width:35px;padding:2px 0 0 7px}.s4{width:47px}
.views{display:flex;margin-left:5px;border:1px solid #7d9fcf;background:#d4e3f5;height:20px}
.status .pc{border:0;background:none;margin-left:9px;width:34px;letter-spacing:-.9px}
.zoom{margin-left:1px}
.taskbar{height:41px;background:#323049;display:flex;justify-content:space-between;color:#eee}
.tray{display:flex;width:234px;align-items:center}
.lang{margin-left:5px;width:33px;letter-spacing:-.3px}
.clock{display:flex;flex-direction:column;align-items:center;line-height:17px;width:66px;letter-spacing:-.6px}
.peek{margin-left:6px;height:41px;border-left:1px solid #77758a}
.ww{font:700 9px "Liberation Sans";fill:#fff}
```
